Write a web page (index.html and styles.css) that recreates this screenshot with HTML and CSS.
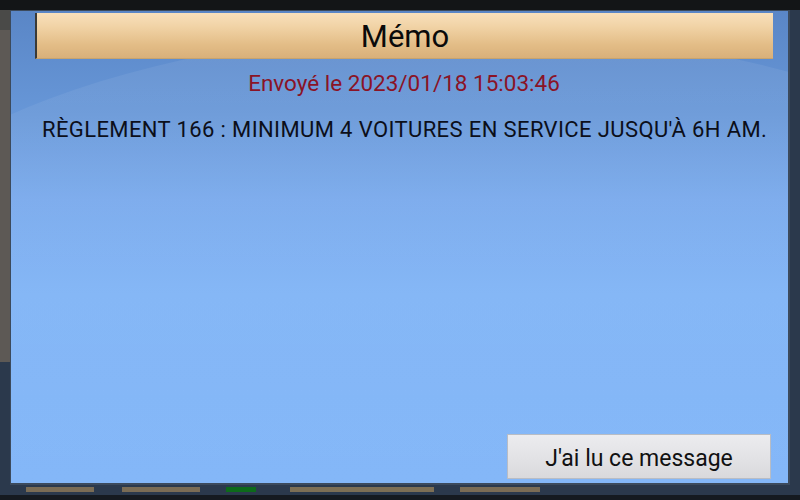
FILE: index.html
```html
<!DOCTYPE html>
<html lang="fr">
<head>
<meta charset="utf-8">
<title>Mémo</title>
<link rel="stylesheet" href="styles.css">
</head>
<body>
<div class="backdrop">
  <div class="dialog">
    <div class="sheen"></div>
    <div class="header">Mémo</div>
    <div class="sent">Envoyé le 2023/01/18 15:03:46</div>
    <div class="message">RÈGLEMENT 166 : MINIMUM 4 VOITURES EN SERVICE JUSQU'À 6H AM.</div>
    <div class="actions">
      <button class="ack">J'ai lu ce message</button>
    </div>
  </div>
</div>
</body>
</html>
```
FILE: styles.css
```css
html, body {
  margin: 0;
  padding: 0;
}
body {
  width: 800px;
  height: 500px;
  overflow: hidden;
  font-family: Roboto, "Liberation Sans", sans-serif;
  background: #2b394c;
}
.backdrop {
  width: 800px;
  height: 500px;
  box-sizing: border-box;
  padding: 10px 10px 15px 10px;
  background:
    linear-gradient(#131517, #131517) 0 0 / 800px 10px no-repeat,
    linear-gradient(#5d5955, #5d5955) 0 30px / 10px 332px no-repeat,
    linear-gradient(#4a4a48, #4a4a48) 0 10px / 10px 20px no-repeat,
    linear-gradient(#7a6c55, #7a6c55) 26px 487px / 68px 5px no-repeat,
    linear-gradient(#7a6c55, #7a6c55) 122px 487px / 78px 5px no-repeat,
    linear-gradient(#0d6a1a, #0d6a1a) 226px 487px / 30px 5px no-repeat,
    linear-gradient(#7d6f55, #7d6f55) 290px 487px / 144px 5px no-repeat,
    linear-gradient(#7a6c55, #7a6c55) 460px 487px / 80px 5px no-repeat,
    linear-gradient(#151a20, #151a20) 0 495px / 800px 5px no-repeat,
    #2b394c;
}
.dialog {
  position: relative;
  width: 780px;
  height: 475px;
  box-sizing: border-box;
  border: 1px solid #3c4a5c;
  border-right-width: 2px;
  border-bottom-width: 2px;
  display: flex;
  flex-direction: column;
  overflow: hidden;
  background: linear-gradient(180deg, #5a86c6 0%, #6797d8 22%, #78a9ec 40%, #80b4f6 60%, #82b6f8 100%);
}
.sheen {
  position: absolute;
  left: -200px;
  top: 20px;
  width: 1300px;
  height: 600px;
  border-radius: 50%;
  background: linear-gradient(180deg, rgba(255,255,255,0.07), rgba(255,255,255,0));
  pointer-events: none;
}
.header {
  position: relative;
  margin: 2px 15px 0 24px;
  height: 46px;
  box-sizing: border-box;
  border-left: 2px solid #3b3a36;
  border-bottom: 1px solid #c7a36e;
  background: linear-gradient(180deg, #f8e0bb 0%, #f1d3a6 30%, #e3bd87 70%, #d9b07a 100%);
  display: flex;
  align-items: center;
  justify-content: center;
  font-size: 31px;
  color: #0a0a0a;
  padding-top: 2px;
}
.sent {
  position: relative;
  margin-top: 11px;
  padding-left: 9px;
  text-align: center;
  font-size: 22.5px;
  color: #8a1326;
  line-height: 26px;
}
.message {
  position: relative;
  margin: 21px 0 0 31px;
  font-size: 22px;
  letter-spacing: 0.38px;
  color: #0c0f1a;
  line-height: 26px;
  white-space: nowrap;
}
.actions {
  position: relative;
  margin-top: auto;
  display: flex;
  justify-content: flex-end;
  padding: 0 17px 4px 0;
}
.ack {
  width: 264px;
  height: 45px;
  border: 1px solid #b8bcc4;
  background: linear-gradient(180deg, #ececef 0%, #e3e3e6 50%, #d9d9dc 100%);
  font-family: Roboto, "Liberation Sans", sans-serif;
  font-size: 23px;
  color: #111;
  padding: 3px 0 0 0;
}
```
